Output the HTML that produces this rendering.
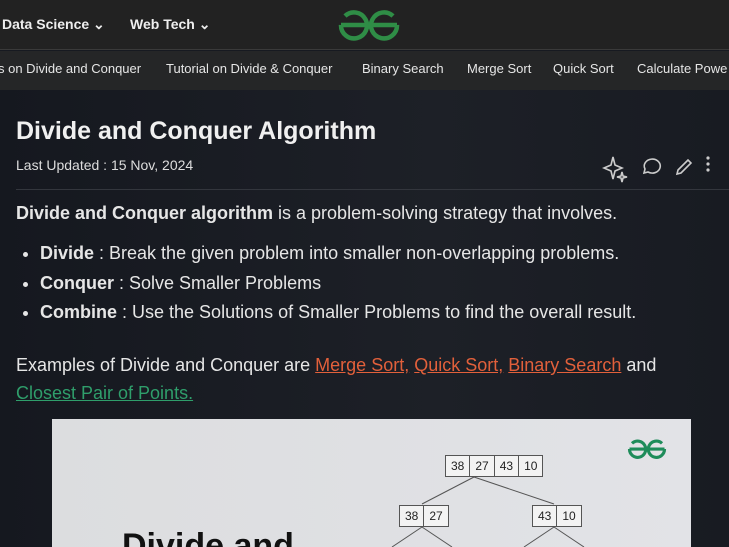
<!DOCTYPE html>
<html><head><meta charset="utf-8"><style>
*{margin:0;padding:0;box-sizing:border-box}
html,body{width:729px;height:547px;overflow:hidden}
body{background:#171a21;font-family:"Liberation Sans",sans-serif;color:#e8e8e8;position:relative}
.top{position:absolute;left:0;top:0;width:729px;height:50px;background:#222;border-bottom:1px solid #3a3a3a}
.top span{position:absolute;top:16px;font-size:14px;font-weight:bold;color:#eee}
.nav{position:absolute;left:0;top:51px;width:729px;height:39px;background:#252627}
.nav span{position:absolute;top:10px;font-size:13px;color:#e6e6e6;white-space:nowrap}
.main{position:absolute;left:0;top:90px;width:729px;height:457px;background:linear-gradient(90deg,#15181f,#1d2027 60%,#181b22)}
h1{position:absolute;left:16px;top:117px;font-size:25px;color:#f0f0f0;font-weight:bold}
.upd{position:absolute;left:16px;top:157px;font-size:14px;color:#ddd}
.hr{position:absolute;left:16px;top:189px;width:713px;height:1px;background:#33363d}
p,li{font-size:18px;color:#e6e6e6;white-space:nowrap}
.p1{position:absolute;left:16px;top:203px}
ul{position:absolute;left:40px;top:243px;list-style:disc}
li{height:29.5px}
.p2{position:absolute;left:16px;top:351px;line-height:28px}
a{text-decoration:underline}
.o{color:#e2603b}.g{color:#2f9e6b}
.img{position:absolute;left:52px;top:419px;width:639px;height:128px;background:linear-gradient(90deg,#dcdddf,#e2e3e7);overflow:hidden}
.box{position:absolute;height:22px;border:1px solid #555;background:#f3f3f3;font-size:12px;color:#222;display:flex}
.box div{border-right:1px solid #555;padding:0 5px;line-height:20px}
.box div:last-child{border:none}
.big{position:absolute;left:70px;top:108px;font-size:34px;font-weight:bold;color:#111}
</style></head><body>
<div class="top">
<span style="left:2px">Data Science ⌄</span>
<span style="left:130px">Web Tech ⌄</span>
<svg style="position:absolute;left:338px;top:9px" width="62" height="32" viewBox="0 0 62 32"><g fill="none" stroke="#2f8d46" stroke-width="4.5"><path d="M3 16 H29 M3 16 A13 13 0 1 0 7 7"/><path d="M59 16 H33 M59 16 A13 13 0 1 1 55 7"/></g></svg>
</div>
<div class="nav">
<span style="left:-2px">s on Divide and Conquer</span>
<span style="left:166px">Tutorial on Divide &amp; Conquer</span>
<span style="left:362px">Binary Search</span>
<span style="left:467px">Merge Sort</span>
<span style="left:553px">Quick Sort</span>
<span style="left:637px">Calculate Powe</span>
</div>
<div class="main"></div>
<h1>Divide and Conquer Algorithm</h1>
<div class="upd">Last Updated : 15 Nov, 2024</div>
<svg style="position:absolute;left:600px;top:150px" width="120" height="34" viewBox="0 0 120 34"><g fill="none" stroke="#ccc" stroke-width="1.6"><path d="M13 7 L15 15 L22 18 L15 21 L13 29 L11 21 L4 18 L11 15Z"/><path d="M22 22 L23 26 L27 27 L23 28 L22 32 L21 28 L17 27 L21 26Z"/><path d="M48 22 A8 7 0 1 0 45 19 L44 23Z"/><path d="M78 20 L88 10 L91 13 L81 23 L77 24Z"/></g><g fill="#ccc"><circle cx="108" cy="8" r="1.6"/><circle cx="108" cy="14" r="1.6"/><circle cx="108" cy="20" r="1.6"/></g></svg>
<div class="hr"></div>
<p class="p1"><b>Divide and Conquer algorithm</b> is a problem-solving strategy that involves.</p>
<ul><li><b>Divide</b> : Break the given problem into smaller non-overlapping problems.</li>
<li><b>Conquer</b> : Solve Smaller Problems</li>
<li><b>Combine</b> : Use the Solutions of Smaller Problems to find the overall result.</li></ul>
<p class="p2">Examples of Divide and Conquer are <a class="o">Merge Sort,</a> <a class="o">Quick Sort,</a> <a class="o">Binary Search</a> and<br><a class="g">Closest Pair of Points.</a></p>
<div class="img">
<svg style="position:absolute;left:575px;top:20px" width="40" height="20" viewBox="0 0 62 32"><g fill="none" stroke="#1e8c5a" stroke-width="5"><path d="M3 16 H29 M3 16 A13 13 0 1 0 7 7"/><path d="M59 16 H33 M59 16 A13 13 0 1 1 55 7"/></g></svg>
<svg style="position:absolute;left:0;top:0" width="639" height="128"><g stroke="#555" stroke-width="1"><line x1="422" y1="58" x2="370" y2="85"/><line x1="422" y1="58" x2="502" y2="85"/><line x1="370" y1="108" x2="340" y2="128"/><line x1="370" y1="108" x2="400" y2="128"/><line x1="502" y1="108" x2="472" y2="128"/><line x1="502" y1="108" x2="532" y2="128"/></g></svg>
<div class="box" style="left:393px;top:36px"><div>38</div><div>27</div><div>43</div><div>10</div></div>
<div class="box" style="left:347px;top:86px"><div>38</div><div>27</div></div>
<div class="box" style="left:480px;top:86px"><div>43</div><div>10</div></div>
<div class="big">Divide and</div>
</div>
</body></html>
